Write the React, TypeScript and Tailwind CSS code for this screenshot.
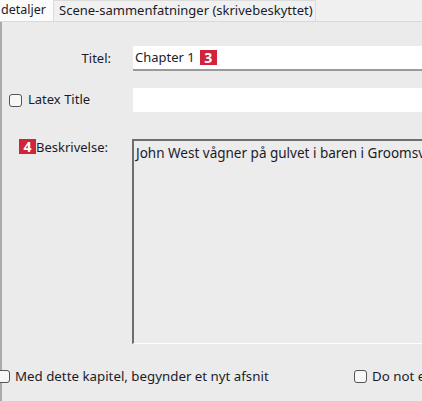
import React from 'react';

function Badge({ n }: { n: string }) {
  return (
    <span className="inline-flex h-[15px] w-[17px] shrink-0 items-center justify-center bg-[#d0243a] text-[14px] font-bold leading-none text-white">
      {n}
    </span>
  );
}

function CheckBox() {
  return <span className="inline-block h-[13px] w-[13px] shrink-0 rounded-[3px] border border-[#555] bg-[#f7f7f7]" />;
}

export default function App() {
  return (
    <div className="relative h-[401px] w-[422px] overflow-hidden bg-[#ebebeb] font-['Noto_Sans',sans-serif] text-[13px] text-[#1b1b2a]">
      {/* Tabs */}
      <div className="flex h-[22px] items-end border-b border-[#d9d9d9] bg-[#f0f0f0]">
        <div className="flex h-[22px] w-[53px] items-center bg-[#fbfbfb] pl-[1px] text-[12.5px]">detaljer</div>
        <div className="flex h-[21px] w-[263px] items-center border-x border-t border-[#dcdcdc] bg-[#f0f0f0] pl-[5px]">
          Scene-sammenfatninger (skrivebeskyttet)
        </div>
      </div>

      {/* Panel */}
      <div className="flex h-[379px] flex-col border-l-2 border-[#a9a9a9]">
        {/* Titel */}
        <div className="mt-[24px] flex h-[25px] items-center">
          <div className="w-[109px] text-right">Titel:</div>
          <div className="ml-[22px] flex h-[25px] flex-1 items-center gap-[5px] border-b-2 border-[#9a9a9a] bg-white pl-[2px]">
            <span>Chapter 1</span>
            <Badge n="3" />
          </div>
        </div>

        {/* Latex Title */}
        <div className="mt-[17px] flex h-[24px] items-center">
          <div className="flex w-[109px] items-center gap-[6px] pl-[7px]">
            <CheckBox />
            <span>Latex Title</span>
          </div>
          <div className="ml-[22px] h-[24px] flex-1 bg-white" />
        </div>

        {/* Beskrivelse */}
        <div className="mt-[27px] flex">
          <div className="flex w-[109px] items-start pl-[17px]">
            <Badge n="4" />
            <span className="pt-[1px] leading-[15px]">Beskrivelse:</span>
          </div>
          <div className="ml-[21px] h-[205px] flex-1 overflow-hidden whitespace-nowrap border-b border-l-2 border-t-2 border-[#6e6e6e] border-b-white bg-[#ececec] pl-[2px] pt-[2px] text-[13.5px]">
            John West vågner på gulvet i baren i Groomsville
          </div>
        </div>

        {/* Bottom checkboxes */}
        <div className="mt-[23px] flex items-center whitespace-nowrap">
          <div className="ml-[-5px] flex w-[357px] shrink-0 items-center gap-[5px]">
            <CheckBox />
            <span className="text-[13.3px]">Med dette kapitel, begynder et nyt afsnit</span>
          </div>
          <div className="flex shrink-0 items-center gap-[5px]">
            <CheckBox />
            <span className="text-[13.3px]">Do not export</span>
          </div>
        </div>
      </div>
    </div>
  );
}
